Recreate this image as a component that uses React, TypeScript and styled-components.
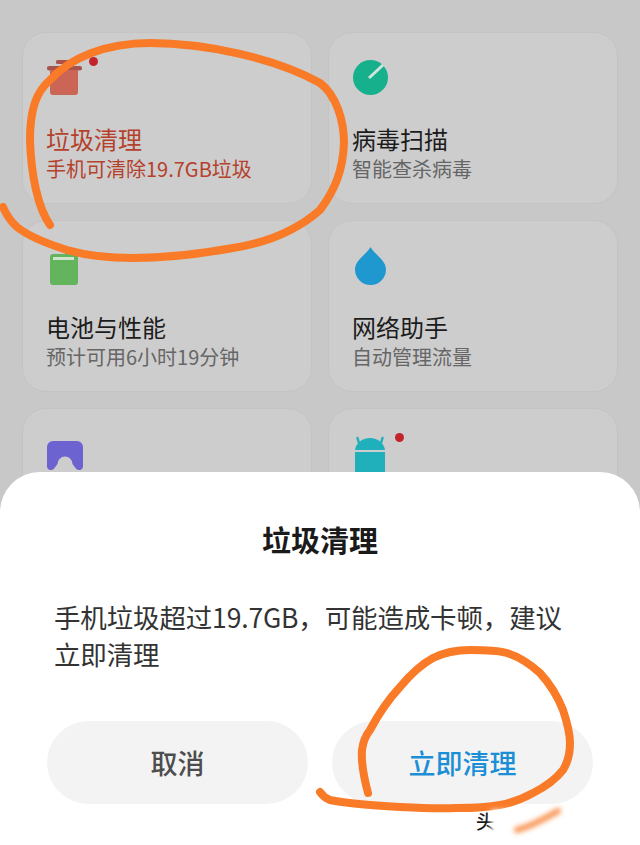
import React from 'react';
import styled, { createGlobalStyle } from 'styled-components';

const GlobalStyle = createGlobalStyle`
  html, body {
    margin: 0;
    padding: 0;
    background: #c8c8c8;
  }
  * {
    box-sizing: border-box;
  }
`;

const Screen = styled.div`
  position: relative;
  width: 640px;
  height: 845px;
  overflow: hidden;
  background: #c8c8c8;
  font-family: 'Noto Sans CJK SC', 'Noto Sans', sans-serif;
`;

const Grid = styled.div`
  display: grid;
  grid-template-columns: 290px 290px;
  grid-auto-rows: 172px;
  gap: 16px;
  padding: 32px 22px 0;
`;

const Card = styled.div`
  display: flex;
  flex-direction: column;
  padding: 27px 0 0 24px;
  border-radius: 24px;
  background: #cdcdcd;
  border: 1px solid #c4c4c4;
`;

const IconSlot = styled.div`
  position: relative;
  width: 64px;
  height: 48px;
  margin-bottom: 14px;
  svg {
    display: block;
    overflow: visible;
  }
`;

const Dot = styled.span`
  position: absolute;
  top: -3px;
  left: 42px;
  width: 9px;
  height: 9px;
  border-radius: 50%;
  background: #c3242c;
`;

const CardTitle = styled.div<{ $alert?: boolean }>`
  margin-left: -1px;
  font-size: 24px;
  line-height: 34px;
  color: ${props => (props.$alert ? '#b5412c' : '#1c1c1c')};
`;

const CardSub = styled.div<{ $alert?: boolean }>`
  margin: -1px 0 0 -1px;
  font-size: 20px;
  line-height: 27px;
  white-space: nowrap;
  color: ${props => (props.$alert ? '#b5412c' : '#666666')};
`;

const Sheet = styled.div`
  position: absolute;
  left: 0;
  right: 0;
  bottom: 0;
  height: 373px;
  display: flex;
  flex-direction: column;
  background: #ffffff;
  border-radius: 40px 40px 0 0;
  padding: 47px 47px 0 47px;
`;

const SheetTitle = styled.div`
  font-size: 29px;
  line-height: 40px;
  font-weight: 700;
  text-align: center;
  color: #1a1a1a;
`;

const SheetBody = styled.div`
  margin-top: 39px;
  padding-left: 7px;
  font-size: 26.5px;
  line-height: 37px;
  letter-spacing: -0.15px;
  color: #333333;
`;

const Actions = styled.div`
  display: grid;
  grid-template-columns: 261px 261px;
  gap: 24px;
  margin-top: 49px;
`;

const ActionButton = styled.button<{ $primary?: boolean }>`
  height: 83px;
  border: 0;
  border-radius: 42px;
  background: #f3f3f3;
  font-family: inherit;
  font-size: 27px;
  font-weight: 500;
  color: ${props => (props.$primary ? '#1b8fd6' : '#4d4d4d')};
`;

const Watermark = styled.div`
  position: absolute;
  left: 476px;
  top: 808px;
  font-size: 19px;
  line-height: 26px;
  font-weight: 500;
  color: #1a1a1a;
`;

const Scribbles = styled.svg`
  position: absolute;
  inset: 0;
  pointer-events: none;
`;

const PotIcon = () => (
  <svg width="36" height="36" viewBox="0 0 36 36">
    <rect x="9" y="0" width="19" height="4" rx="1.5" fill="#a8544c" />
    <rect x="0" y="6" width="35" height="4.500" rx="2" fill="#a8544c" />
    <path d="M3 10h28v22a3 3 0 0 1-3 3H6a3 3 0 0 1-3-3z" fill="#cb6556" />
  </svg>
);

const ScanIcon = () => (
  <svg width="36" height="36" viewBox="0 0 36 36">
    <circle cx="17.500" cy="17.500" r="17.500" fill="#17b08d" />
    <path d="M16 18 L30 5" stroke="#cfe6df" strokeWidth="3" />
  </svg>
);

const BatteryIcon = () => (
  <svg width="32" height="40" viewBox="0 0 32 40">
    <rect x="18" y="1" width="7" height="6" rx="1" fill="#7a9a72" />
    <rect x="3" y="6" width="28" height="31" rx="3" fill="#64b45e" />
    <rect x="6" y="9" width="21" height="3" fill="#cfe5cc" />
  </svg>
);

const DropIcon = () => (
  <svg width="36" height="38" viewBox="0 0 36 38">
    <path
      d="M17.500 -1C21 6 33 12 33 21.500a15.500 15.500 0 0 1-31 0C2 12 14 6 17.500 -1z"
      fill="#1f97cf"
    />
  </svg>
);

const GameIcon = () => (
  <svg width="40" height="40" viewBox="0 -5 40 40">
    <path
      d="M6 0h24a6 6 0 0 1 6 6v19a4 4 0 0 1-7.500 2l-3-4a7 7 0 0 0-15 0l-3 4A4 4 0 0 1 0 25V6a6 6 0 0 1 6-6z"
      fill="#6c62d0"
    />
  </svg>
);

const AndroidIcon = () => (
  <svg width="34" height="42" viewBox="0 0 34 42">
    <path d="M4.500 2l1.500 5M29.500 2l-1.500 5" stroke="#1fb0bc" strokeWidth="2.500" strokeLinecap="round" />
    <path d="M2 14C3 7 9 2 17 2s14 5 15 12z" fill="#1fb0bc" />
    <path d="M2 16h30v23a3 3 0 0 1-3 3H5a3 3 0 0 1-3-3z" fill="#1fb0bc" />
  </svg>
);

const items = [
  { icon: <PotIcon />, title: '垃圾清理', sub: '手机可清除19.7GB垃圾', alert: true, dot: true },
  { icon: <ScanIcon />, title: '病毒扫描', sub: '智能查杀病毒' },
  { icon: <BatteryIcon />, title: '电池与性能', sub: '预计可用6小时19分钟' },
  { icon: <DropIcon />, title: '网络助手', sub: '自动管理流量' },
  { icon: <GameIcon />, title: '', sub: '' },
  { icon: <AndroidIcon />, title: '', sub: '', dot: true }
];

export default function App() {
  return (
    <Screen>
      <GlobalStyle />
      <Grid>
        {items.map((item, i) => (
          <Card key={i}>
            <IconSlot>
              {item.icon}
              {item.dot && <Dot />}
            </IconSlot>
            <CardTitle $alert={item.alert}>{item.title}</CardTitle>
            <CardSub $alert={item.alert}>{item.sub}</CardSub>
          </Card>
        ))}
      </Grid>
      <Sheet>
        <SheetTitle>垃圾清理</SheetTitle>
        <SheetBody>
          手机垃圾超过19.7GB，可能造成卡顿，建议
          <br />
          立即清理
        </SheetBody>
        <Actions>
          <ActionButton>取消</ActionButton>
          <ActionButton $primary>立即清理</ActionButton>
        </Actions>
      </Sheet>
      <Watermark>头</Watermark>
      <Scribbles width="640" height="845" viewBox="0 0 640 845" fill="none">
        <defs>
          <filter id="smudge" x="-30%" y="-100%" width="160%" height="300%">
            <feGaussianBlur stdDeviation="2.500" />
          </filter>
        </defs>
        <path
          d="M50 225C38 208 31 175 30 140C30 110 36 92 50 80C70 58 105 43 150 43C205 43 275 58 320 83C336 95 344 120 344 143C343 170 335 190 320 210C295 232 265 243 233 248C200 254 165 258 133 258C105 258 85 255 67 250C45 243 28 236 17 227C10 221 6 214 3 207"
          stroke="#f97a27"
          strokeWidth="8"
          strokeLinecap="round"
        />
        <path
          d="M368 793C364 778 361 763 362 750C363 742 366 735 370 730C378 715 388 700 400 687C410 675 420 665 433 658C445 652 458 650 470 650C483 650 496 650 507 653C520 657 530 664 540 673C550 684 558 697 563 710C567 722 570 733 570 743C570 753 568 762 563 770C555 780 545 787 533 793C522 799 512 803 500 805C485 808 470 808 457 808C438 809 418 808 400 807C382 806 365 805 350 803C342 802 335 801 330 800C325 798 322 795 320 792"
          stroke="#f97a27"
          strokeWidth="8"
          strokeLinecap="round"
        />
        <rect x="491" y="810" width="30" height="24" fill="#ffffff" filter="url(#smudge)" />
        <path d="M517 830C532 826 546 818 558 811" stroke="#f9934f" strokeWidth="6" strokeLinecap="round" filter="url(#smudge)" />
      </Scribbles>
    </Screen>
  );
}
